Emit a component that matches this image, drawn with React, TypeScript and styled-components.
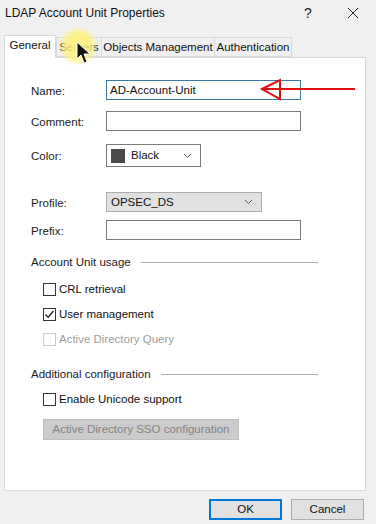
import React from 'react'
import styled, { createGlobalStyle } from 'styled-components'

const GlobalStyle = createGlobalStyle`
  html, body {
    margin: 0;
    padding: 0;
    background: #f0f0f0;
  }
  body {
    font-family: "Liberation Sans", Arial, sans-serif;
    font-size: 11.5px;
    line-height: 15px;
    color: #1a1a1a;
  }
`

const Window = styled.div`
  position: relative;
  width: 376px;
  height: 524px;
  background: #f0f0f0;
  overflow: hidden;
`

const TitleBar = styled.div`
  display: flex;
  align-items: center;
  height: 26px;
  padding-left: 5px;
`

const Title = styled.div`
  flex: 1;
  font-size: 12px;
  color: #111;
`

const TitleButton = styled.div<{ w: number }>`
  width: ${p => p.w}px;
  display: flex;
  justify-content: center;
  font-size: 14px;
  color: #222;
`

const TabStrip = styled.div`
  display: flex;
  align-items: flex-end;
  height: 23px;
  margin-top: 8px;
  padding-left: 4px;
`

const Tab = styled.div<{ active?: boolean; w: number }>`
  box-sizing: border-box;
  width: ${p => p.w}px;
  height: ${p => (p.active ? 23 : 20)}px;
  border: 1px solid #d9d9d9;
  border-bottom: ${p => (p.active ? 'none' : '1px solid #d9d9d9')};
  background: ${p => (p.active ? '#fff' : '#f0f0f0')};
  margin-bottom: ${p => (p.active ? -1 : 0)}px;
  margin-right: ${p => (p.active ? 0 : -1)}px;
  position: relative;
  z-index: ${p => (p.active ? 2 : 1)};
  display: flex;
  align-items: center;
  justify-content: center;
  white-space: nowrap;
  color: #111;
  padding-bottom: ${p => (p.active ? 3 : 0)}px;
`

const Panel = styled.div`
  box-sizing: border-box;
  margin-left: 4px;
  width: 362px;
  height: 434px;
  border: 1px solid #d9d9d9;
  background: #fff;
  display: flex;
  flex-direction: column;
`

const Row = styled.div<{ top: number }>`
  display: flex;
  align-items: center;
  margin-top: ${p => p.top}px;
  padding-left: 26px;
`

const Label = styled.div`
  width: 75px;
  padding-top: 2px;
  color: #222;
`

const TextBox = styled.div<{ focused?: boolean; w: number }>`
  box-sizing: border-box;
  width: ${p => p.w}px;
  height: 20px;
  border: 1px solid ${p => (p.focused ? '#3c7aa8' : '#7a7a7a')};
  background: #fff;
  padding: 0 3px;
  display: flex;
  align-items: center;
  color: #111;
`

const Select = styled.div<{ gray?: boolean; w: number; h: number }>`
  box-sizing: border-box;
  width: ${p => p.w}px;
  height: ${p => p.h}px;
  border: 1px solid ${p => (p.gray ? '#adadad' : '#7a7a7a')};
  background: ${p => (p.gray ? '#e1e1e1' : '#fff')};
  display: flex;
  align-items: center;
  padding: 0 8px 0 4px;
  gap: 6px;
  color: #111;
`

const SelectText = styled.div`
  flex: 1;
`

const Swatch = styled.div`
  width: 14px;
  height: 14px;
  background: #4a4a4a;
`

const GroupRow = styled.div<{ top: number }>`
  display: flex;
  align-items: center;
  margin-top: ${p => p.top}px;
  padding-left: 26px;
  width: 287px;
  gap: 10px;
  white-space: nowrap;
`

const GroupLine = styled.div`
  flex: 1;
  height: 1px;
  background: #b0b0b0;
`

const CheckRow = styled.label<{ top: number; disabled?: boolean }>`
  display: flex;
  align-items: center;
  gap: 3px;
  margin-top: ${p => p.top}px;
  padding-left: 38px;
  color: ${p => (p.disabled ? '#a0a0a0' : '#111')};
`

const Box = styled.div<{ disabled?: boolean }>`
  box-sizing: border-box;
  width: 13px;
  height: 13px;
  border: 1px solid ${p => (p.disabled ? '#cccccc' : '#333')};
  background: #fff;
  display: flex;
  align-items: center;
  justify-content: center;
`

const DisabledButton = styled.div`
  box-sizing: border-box;
  margin-top: 12px;
  margin-left: 38px;
  width: 196px;
  height: 21px;
  background: #cccccc;
  border: 1px solid #bfbfbf;
  color: #838383;
  display: flex;
  align-items: center;
  justify-content: center;
`

const Footer = styled.div`
  display: flex;
  justify-content: flex-end;
  gap: 9px;
  padding: 8px 12px 0 0;
`

const Button = styled.div<{ primary?: boolean }>`
  box-sizing: border-box;
  width: 73px;
  height: 21px;
  background: #e1e1e1;
  border: ${p => (p.primary ? '2px solid #0078d7' : '1px solid #adadad')};
  display: flex;
  align-items: center;
  justify-content: center;
  color: #111;
`

const Overlay = styled.svg`
  position: absolute;
  left: 0;
  top: 0;
  z-index: 10;
  pointer-events: none;
`

const Chevron = () => (
  <svg width="9" height="6" viewBox="0 0 9 6">
    <path d="M1 1 L4.5 4.5 L8 1" fill="none" stroke="#555" strokeWidth="1" />
  </svg>
)

const Tick = () => (
  <svg width="11" height="11" viewBox="0 0 11 11">
    <path d="M1.5 5.5 L4.2 8.2 L9.5 2" fill="none" stroke="#222" strokeWidth="1.3" />
  </svg>
)

const App: React.FC = () => {
  return (
    <Window>
      <GlobalStyle />
      <TitleBar>
        <Title>LDAP Account Unit Properties</Title>
        <TitleButton w={44}>?</TitleButton>
        <TitleButton w={46}>
          <svg width="12" height="12" viewBox="0 0 12 12">
            <path d="M1 1 L11 11 M11 1 L1 11" stroke="#222" strokeWidth="1" />
          </svg>
        </TitleButton>
      </TitleBar>

      <TabStrip>
        <Tab active w={52}>General</Tab>
        <Tab w={46}>Servers</Tab>
        <Tab w={114}>Objects Management</Tab>
        <Tab w={78}>Authentication</Tab>
      </TabStrip>

      <Panel>
        <Row top={22}>
          <Label>Name:</Label>
          <TextBox focused w={195}>AD-Account-Unit</TextBox>
        </Row>
        <Row top={11}>
          <Label>Comment:</Label>
          <TextBox w={195} />
        </Row>
        <Row top={13}>
          <Label>Color:</Label>
          <Select w={95} h={23}>
            <Swatch />
            <SelectText>Black</SelectText>
            <Chevron />
          </Select>
        </Row>
        <Row top={25}>
          <Label>Profile:</Label>
          <Select gray w={156} h={20}>
            <SelectText>OPSEC_DS</SelectText>
            <Chevron />
          </Select>
        </Row>
        <Row top={8}>
          <Label>Prefix:</Label>
          <TextBox w={195} />
        </Row>

        <GroupRow top={15}>
          Account Unit usage
          <GroupLine />
        </GroupRow>
        <CheckRow top={12}>
          <Box />
          CRL retrieval
        </CheckRow>
        <CheckRow top={10}>
          <Box>
            <Tick />
          </Box>
          User management
        </CheckRow>
        <CheckRow top={10} disabled>
          <Box disabled />
          Active Directory Query
        </CheckRow>

        <GroupRow top={20}>
          Additional configuration
          <GroupLine />
        </GroupRow>
        <CheckRow top={10}>
          <Box />
          Enable Unicode support
        </CheckRow>
        <DisabledButton>Active Directory SSO configuration</DisabledButton>
      </Panel>

      <Footer>
        <Button primary>OK</Button>
        <Button>Cancel</Button>
      </Footer>

      <Overlay width="376" height="524">
        <defs>
          <radialGradient id="glow">
            <stop offset="0%" stopColor="#fff27a" stopOpacity="0.95" />
            <stop offset="65%" stopColor="#fff27a" stopOpacity="0.8" />
            <stop offset="100%" stopColor="#fff27a" stopOpacity="0" />
          </radialGradient>
        </defs>
        <circle cx="78" cy="46" r="20" fill="url(#glow)" />
        <path
          d="M77 42 L77 59 L81 55 L84 63 L87 62 L84 54 L90 54 Z"
          fill="#111"
          stroke="#fff"
          strokeWidth="1"
        />
        <path d="M262 89 L355 89" stroke="#e01010" strokeWidth="2" />
        <path d="M262 89 L280 80 L280 99 Z" fill="none" stroke="#e01010" strokeWidth="2" />
      </Overlay>
    </Window>
  )
}

export default App
